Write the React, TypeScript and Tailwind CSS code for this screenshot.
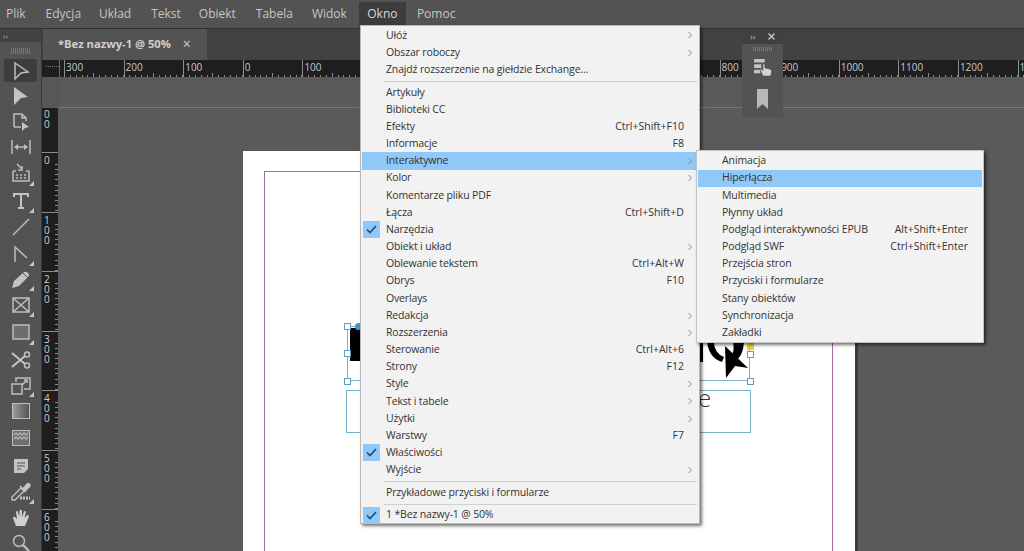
import React from "react";

type Item = { label?: string; sc?: string; arrow?: boolean; check?: boolean; active?: boolean; sep?: boolean };

const mainMenu: Item[] = [
  { label: "Ułóż", arrow: true },
  { label: "Obszar roboczy", arrow: true },
  { label: "Znajdź rozszerzenie na giełdzie Exchange..." },
  { sep: true },
  { label: "Artykuły" },
  { label: "Biblioteki CC" },
  { label: "Efekty", sc: "Ctrl+Shift+F10" },
  { label: "Informacje", sc: "F8" },
  { label: "Interaktywne", arrow: true, active: true },
  { label: "Kolor", arrow: true },
  { label: "Komentarze pliku PDF" },
  { label: "Łącza", sc: "Ctrl+Shift+D" },
  { label: "Narzędzia", check: true },
  { label: "Obiekt i układ", arrow: true },
  { label: "Oblewanie tekstem", sc: "Ctrl+Alt+W" },
  { label: "Obrys", sc: "F10" },
  { label: "Overlays" },
  { label: "Redakcja", arrow: true },
  { label: "Rozszerzenia", arrow: true },
  { label: "Sterowanie", sc: "Ctrl+Alt+6" },
  { label: "Strony", sc: "F12" },
  { label: "Style", arrow: true },
  { label: "Tekst i tabele", arrow: true },
  { label: "Użytki", arrow: true },
  { label: "Warstwy", sc: "F7" },
  { label: "Właściwości", check: true },
  { label: "Wyjście", arrow: true },
  { sep: true },
  { label: "Przykładowe przyciski i formularze" },
  { sep: true },
  { label: "1 *Bez nazwy-1 @ 50%", check: true },
];

const subMenu: Item[] = [
  { label: "Animacja" },
  { label: "Hiperłącza", active: true },
  { label: "Multimedia" },
  { label: "Płynny układ" },
  { label: "Podgląd interaktywności EPUB", sc: "Alt+Shift+Enter" },
  { label: "Podgląd SWF", sc: "Ctrl+Shift+Enter" },
  { label: "Przejścia stron" },
  { label: "Przyciski i formularze" },
  { label: "Stany obiektów" },
  { label: "Synchronizacja" },
  { label: "Zakładki" },
];

function Chevron() {
  return (
    <svg width="6" height="8" viewBox="0 0 6 8" className="shrink-0">
      <path d="M1.5 1 L4.5 4 L1.5 7" fill="none" stroke="#8a8a8a" strokeWidth="1" />
    </svg>
  );
}

function MainRow({ it }: { it: Item }) {
  if (it.sep) {
    return (
      <div className="h-[5.4px] flex items-center pl-[23px] pr-[2px]">
        <div className="h-px w-full bg-[#d0d0d0]" />
      </div>
    );
  }
  return (
    <div className={`h-[17.18px] flex items-center relative ml-px mr-[3px] ${it.active ? "bg-[#90c8f7]" : ""}`}>
      {it.check && (
        <div className="w-[17px] h-[17px] ml-px bg-[#90c8f7] flex items-center justify-center absolute left-0 top-0">
          <svg width="11" height="9" viewBox="0 0 11 9">
            <path d="M1 4.5 L4 7.5 L10 1" fill="none" stroke="#1f4e79" strokeWidth="1.7" />
          </svg>
        </div>
      )}
      <span className="ml-[24px] whitespace-nowrap tracking-[-0.15px]">{it.label}</span>
      <span className="ml-auto whitespace-nowrap">{it.sc}</span>
      <span className="w-[13px] flex justify-center ml-[-1px]">{it.arrow && <Chevron />}</span>
    </div>
  );
}

function Menu() {
  return (
    <div className="absolute left-[360px] top-[25px] w-[340px] h-[499px] bg-[#f2f2f2] border border-[#b8b8b8] shadow-[2px_2px_3px_rgba(0,0,0,0.55)] pt-[0.9px] text-[10.5px] text-[#333333] z-20">
      {mainMenu.map((it, i) => (
        <MainRow key={i} it={it} />
      ))}
    </div>
  );
}

function SubMenu() {
  return (
    <div className="absolute left-[696px] top-[150px] w-[288px] h-[193px] bg-[#f2f2f2] border border-[#c4c4c4] shadow-[2px_2px_3px_rgba(0,0,0,0.55)] pt-[1.5px] text-[10.5px] text-[#333333] z-30">
      {subMenu.map((it, i) => (
        <div key={i} className={`h-[17.18px] flex items-center ml-px mr-px pr-[14px] ${it.active ? "bg-[#90c8f7]" : ""}`}>
          <span className="ml-[24px] whitespace-nowrap tracking-[-0.1px]">{it.label}</span>
          <span className="ml-auto whitespace-nowrap">{it.sc}</span>
        </div>
      ))}
    </div>
  );
}

const topItems = ["Plik", "Edycja", "Układ", "Tekst", "Obiekt", "Tabela", "Widok"];

function TopBar() {
  const gaps = [6, 20, 18, 20, 18, 20, 19];
  return (
    <div className="h-[29px] bg-[#535353] flex items-center text-[12px] text-[#c6c6c6] border-b border-[#303030] shrink-0">
      {topItems.map((t, i) => (
        <span key={t} style={{ marginLeft: gaps[i] }}>
          {t}
        </span>
      ))}
      <span className="ml-[12px] w-[47px] h-[24px] bg-[#3c3c3c] flex items-center justify-center text-[#d8d8d8] -mt-px">Okno</span>
      <span className="ml-[11px]">Pomoc</span>
    </div>
  );
}

function Corner() {
  return <span className="absolute right-[3px] bottom-[1px] w-0 h-0 border-l-[5px] border-b-[5px] border-l-transparent border-b-[#c8c8c8]" />;
}

const s = { fill: "none", stroke: "#bdbdbd", strokeWidth: 1.5 };

const tools: { h: number; corner?: boolean; sel?: boolean; icon: React.ReactNode }[] = [
  { h: 24, sel: true, icon: <svg width="18" height="20" viewBox="0 0 18 20"><path d="M3 2 L16 11 L9 12 L3 18 Z" {...s} /></svg> },
  { h: 26, icon: <svg width="18" height="20" viewBox="0 0 18 20"><path d="M2 1 L16 11 L9 12 L2 19 Z" fill="#c4c4c4" /></svg> },
  { h: 25, icon: <svg width="18" height="20" viewBox="0 0 18 20"><path d="M2 15 V2 H10 L14 6 V9 M10 2 V6 H14 M2 15 H9" {...s} /><path d="M10 10 L17 15 L13 16 L10 19 Z" fill="#c4c4c4" /></svg> },
  { h: 25, icon: <svg width="22" height="16" viewBox="0 0 22 16"><path d="M2 1 V15 M20 1 V15 M5 8 H17" {...s} /><path d="M4 8 L8 5 V11 Z M18 8 L14 5 V11 Z" fill="#bdbdbd" /></svg> },
  { h: 28, corner: true, icon: <svg width="20" height="20" viewBox="0 0 20 20"><path d="M2 8 H5 M15 8 H18 M2 8 V18 H18 V8" {...s} /><path d="M6 1 L11 6 M11 3 V7 H7" {...s} /><path d="M5 12 H7 M9 12 H11 M13 12 H15 M5 15 H7 M9 15 H11 M13 15 H15" stroke="#bdbdbd" strokeWidth="1.6" /></svg> },
  { h: 27, corner: true, icon: <svg width="16" height="18" viewBox="0 0 16 18"><path d="M1 5 V2 H15 V5 M8 2 V16 M5 16 H11" fill="none" stroke="#c4c4c4" strokeWidth="2" /></svg> },
  { h: 26, icon: <svg width="18" height="18" viewBox="0 0 18 18"><path d="M1 17 L17 1" {...s} /></svg> },
  { h: 27, corner: true, icon: <svg width="16" height="18" viewBox="0 0 16 18"><path d="M2 17 V2 L14 13" {...s} /></svg> },
  { h: 25, corner: true, icon: <svg width="20" height="20" viewBox="0 0 20 20"><path d="M1 18 L3 11 L13 2 Q15 1 17 3 Q19 5 17 7 L8 16 Z" fill="#c4c4c4" /><path d="M12 3 L17 8" stroke="#535353" strokeWidth="1" /></svg> },
  { h: 26, corner: true, icon: <svg width="18" height="16" viewBox="0 0 18 16"><path d="M1 1 H17 V15 H1 Z M1 1 L17 15 M17 1 L1 15" {...s} /></svg> },
  { h: 28, corner: true, icon: <svg width="18" height="16" viewBox="0 0 18 16"><rect x="1" y="1" width="16" height="14" fill="#6e6e6e" stroke="#bdbdbd" strokeWidth="1.5" /></svg> },
  { h: 27, icon: <svg width="20" height="18" viewBox="0 0 20 18"><circle cx="16" cy="3.5" r="2.5" {...s} /><circle cx="16" cy="14.5" r="2.5" {...s} /><path d="M1 2 L14 13 M1 16 L14 5" stroke="#c4c4c4" strokeWidth="2" /></svg> },
  { h: 25, corner: true, icon: <svg width="20" height="18" viewBox="0 0 20 18"><path d="M5 5 V1 H19 V12 H13" {...s} /><rect x="1" y="7" width="10" height="10" {...s} /><path d="M11 8 L16 3 M13 3 H16 V6" {...s} /></svg> },
  { h: 26, icon: <div className="w-[18px] h-[16px] border border-[#bdbdbd] bg-gradient-to-r from-[#9a9a9a] to-[#555555]" /> },
  { h: 28, icon: <svg width="18" height="16" viewBox="0 0 18 16"><rect x="0.5" y="0.5" width="17" height="15" fill="#707070" stroke="#bdbdbd" /><path d="M2 5 L4 3 L6 5 L8 3 L10 5 L12 3 L14 5 L16 3 M2 9 L4 7 L6 9 L8 7 L10 9 L12 7 L14 9 L16 7" stroke="#b0b0b0" strokeWidth="1.4" fill="none" /></svg> },
  { h: 27, icon: <svg width="16" height="16" viewBox="0 0 16 16"><path d="M1 1 H15 V11 L11 15 H1 Z" fill="#c4c4c4" /><path d="M4 5 H12 M4 8 H12 M4 11 H8" stroke="#535353" strokeWidth="1.2" /></svg> },
  { h: 26, corner: true, icon: <svg width="22" height="20" viewBox="0 0 22 20"><path d="M2 18 L2 15 L11 6 L14 9 L5 18 Z" {...s} /><path d="M10 4 L16 10 M13 7 L17 2 Q19 1 20 3 Q20 5 18 6 L15 9" fill="#c4c4c4" stroke="#c4c4c4" strokeWidth="1.5" /><path d="M10 16 H20" stroke="#c4c4c4" strokeWidth="3" strokeDasharray="2 1" /></svg> },
  { h: 25, icon: <svg width="18" height="18" viewBox="0 0 18 18"><path d="M4 17 L1 9 Q1 7 3 8 L5 10 L4 3 Q5 1 6 3 L7.5 8 V1.5 Q9 0 10 1.5 V8 L12 2.5 Q13.5 1.5 14 3 L12.5 9 L15.5 6 Q17 6 17 7.5 L13 17 Z" fill="#d0d0d0" /></svg> },
  { h: 25, icon: <svg width="18" height="18" viewBox="0 0 18 18"><circle cx="7" cy="7" r="5.5" {...s} /><path d="M11 11 L17 17" stroke="#bdbdbd" strokeWidth="2.4" /></svg> },
];

function ToolPanel() {
  return (
    <aside className="w-[42px] shrink-0 bg-[#535353] border-r border-[#3a3a3a] flex flex-col overflow-hidden">
      <div className="h-[13px] bg-[#434343] text-[8px] leading-[13px] pl-[3px] text-[#bdbdbd] shrink-0">››</div>
      <div className="h-[17px] flex items-center justify-center shrink-0">
        <div className="w-[20px] h-[6px] bg-[repeating-linear-gradient(90deg,#777777_0px,#777777_1px,transparent_1px,transparent_2px)]" />
      </div>
      {tools.map((t, i) => (
        <div key={i} className="relative shrink-0 flex items-center justify-center mx-1" style={{ height: t.h }}>
          {t.sel && <div className="absolute inset-x-0 top-0 h-[23px] bg-[#3d3d3d] rounded-[2px]" />}
          <span className="relative flex">{t.icon}</span>
          {t.corner && <Corner />}
        </div>
      ))}
    </aside>
  );
}

function Tabs() {
  return (
    <div className="h-[31px] bg-[#424242] flex shrink-0">
      <div className="w-[164px] ml-px bg-[#535353] flex items-center pl-[15px] text-[11.2px] font-bold text-[#cfcfcf] whitespace-nowrap">
        <span>*Bez nazwy-1 @ 50%</span>
        <span className="ml-[12px] font-normal text-[14px] leading-none -mt-[2px]">×</span>
      </div>
    </div>
  );
}

const hLabels = ["300", "200", "100", "0", "100", "", "", "", "", "", "", "800", "900", "1000", "1100", "1200", "1"];
const tick5 = [0, 1, 2, 3, 4, 5, 6, 7, 8, 9];

function HRuler() {
  return (
    <div className="h-[17px] bg-[#1e1e1e] flex shrink-0 overflow-hidden text-[10px] text-[#c8c8c8]">
      <div className="w-[18px] shrink-0 border-r border-[#6a6a6a] relative">
        <div className="absolute left-1 right-0 top-[6px] border-t border-dotted border-[#777777]" />
      </div>
      <div className="w-[4px] shrink-0" />
      {hLabels.map((l, i) => (
        <div key={i} className="w-[59.6px] shrink-0 border-l border-[#8c8c8c] relative pl-[1px] leading-[14px]">
          {l}
          <div className="absolute left-0 right-0 bottom-0 flex">
            {tick5.map((k) => (
              <div key={k} className={`flex-1 border-r border-[#8a8a8a] ${k === 4 ? "h-[4px] self-end" : "h-[2px] self-end"}`} />
            ))}
          </div>
        </div>
      ))}
    </div>
  );
}

const vLabels = [["0"], ["1", "0", "0"], ["2", "0", "0"], ["3", "0", "0"], ["4", "0", "0"], ["5", "0", "0"], ["6", "0", "0"]];

function VRuler() {
  return (
    <div className="w-[17px] shrink-0 flex flex-col">
      <div className="h-[31px] bg-[#575757] shrink-0" />
      <div className="flex-1 bg-[#1e1e1e] border-r border-[#5c5c5c] text-[10px] leading-[10px] text-[#cfcfcf] overflow-hidden">
        <div className="h-[44px] pl-[2px] flex flex-col pt-px">
          <span>0</span>
          <span>0</span>
        </div>
        {vLabels.map((g, i) => (
          <div key={i} className="h-[59.5px] border-t border-[#8c8c8c] pl-[2px] pt-[2px] flex flex-col relative">
            {g.map((d, j) => (
              <span key={j}>{d}</span>
            ))}
            <div className="absolute right-0 top-[11px] bottom-0 w-[3px] flex flex-col justify-between">
              {tick5.map((k) => (
                <div key={k} className="h-px bg-[#888888]" />
              ))}
            </div>
          </div>
        ))}
      </div>
    </div>
  );
}

const ox = 243;
const oy = 152;

function Handle({ x, y }: { x: number; y: number }) {
  return (
    <div
      className="absolute w-[7px] h-[7px] bg-white border border-[#5f9fc4]"
      style={{ left: x - 3.5 - ox, top: y - 3.5 - oy }}
    />
  );
}

function PageArt() {
  return (
    <>
      <svg className="absolute" style={{ left: 340 - ox, top: 320 - oy }} width="420" height="70" viewBox="340 320 420 70">
        <rect x="350" y="329" width="11" height="33" fill="#000" />
        <path d="M700 343 H703 V363 H700 Z" fill="#000" />
        <path d="M707 343 Q709 359 722 363 L724 358 Q714 354 714 343 Z" fill="#000" />
        <path d="M733 343 H744 Q743 358 735 362 L731 357 Q735 352 733 343 Z" fill="#000" />
        <path d="M725 347 L748 369 L735 367 L726 379 Z" fill="#000" />
      </svg>
      <div className="absolute border border-[#7fb0cc]" style={{ left: 347 - ox, top: 327 - oy, width: 403, height: 55 }} />
      <div className="absolute border border-[#7ab4cc]" style={{ left: 346 - ox, top: 391 - oy, width: 405, height: 43 }} />
      <span className="absolute text-[24px] leading-none text-[#333333] font-light" style={{ left: 698 - ox, top: 387 - oy }}>e</span>
      <Handle x={347} y={327} />
      <Handle x={347} y={354} />
      <Handle x={347} y={382} />
      <Handle x={750} y={355} />
      <Handle x={750} y={382} />
      <div className="absolute w-[7px] h-[7px] rounded-full bg-[#3a9ad0]" style={{ left: 355 - ox, top: 324 - oy }} />
      <div className="absolute w-[7px] h-[7px] bg-[#f0d020]" style={{ left: 747 - ox, top: 344 - oy }} />
    </>
  );
}

function Pasteboard() {
  return (
    <div className="flex-1 bg-[#5a5a5a] overflow-hidden">
      <div className="h-[31px] border-b border-[#787878]" />
      <div className="pt-[43px] pl-[184px]">
        <div className="w-[615px] h-[420px] bg-white border-r-[3px] border-[#3a3a3a] relative pt-[20px] pl-[21px]">
          <div className="w-[569px] h-[400px] border border-[#a46aa8] border-b-0" />
          <PageArt />
        </div>
      </div>
    </div>
  );
}

function FloatPanel() {
  return (
    <div className="absolute left-[742px] top-[29px] w-[41px] h-[88px] bg-[#535353] z-10 flex flex-col items-center">
      <div className="h-[15px] w-full bg-[#404040] flex items-center justify-between px-[8px] text-[9px] text-[#c0c0c0] shrink-0">
        <span>››</span>
        <svg width="7" height="7" viewBox="0 0 7 7"><path d="M0.5 0.5 L6.5 6.5 M6.5 0.5 L0.5 6.5" stroke="#c8c8c8" strokeWidth="1.3" /></svg>
      </div>
      <div className="w-[20px] h-[4px] mt-[3px] bg-[repeating-linear-gradient(90deg,#777777_0px,#777777_1px,transparent_1px,transparent_2px)]" />
      <svg width="18" height="18" viewBox="0 0 20 20" className="mt-[7px]">
        <path d="M0 2 Q0 1 1 1 H11 Q12 1 12 2 V4 Q12 5 11 5 H1 Q0 5 0 4 Z M0 8 Q0 7 1 7 H8 V11 H1 Q0 11 0 10 Z M0 14 Q0 13 1 13 H7 V17 H1 Q0 17 0 16 Z" fill="#c4c4c4" />
        <path d="M10 20 L7 13 Q7 12 8.5 12.5 L10 14 V7 Q11 5.5 12 7 V11 L18 12.5 Q19.5 13 19.5 15 L18.5 20 Z" fill="#d4d4d4" stroke="#535353" strokeWidth="0.6" />
      </svg>
      <svg width="11" height="20" viewBox="0 0 11 20" className="mt-[13px]">
        <path d="M0 0 H11 V20 L5.5 15 L0 20 Z" fill="#b8b8b8" />
      </svg>
    </div>
  );
}

export default function App() {
  return (
    <div className="relative w-[1024px] h-[551px] overflow-hidden bg-[#535353] flex flex-col font-['Open_Sans',sans-serif]">
      <TopBar />
      <div className="flex flex-1 min-h-0">
        <ToolPanel />
        <div className="flex-1 flex flex-col min-w-0">
          <Tabs />
          <HRuler />
          <div className="flex flex-1 min-h-0">
            <VRuler />
            <Pasteboard />
          </div>
        </div>
      </div>
      <FloatPanel />
      <Menu />
      <SubMenu />
    </div>
  );
}
